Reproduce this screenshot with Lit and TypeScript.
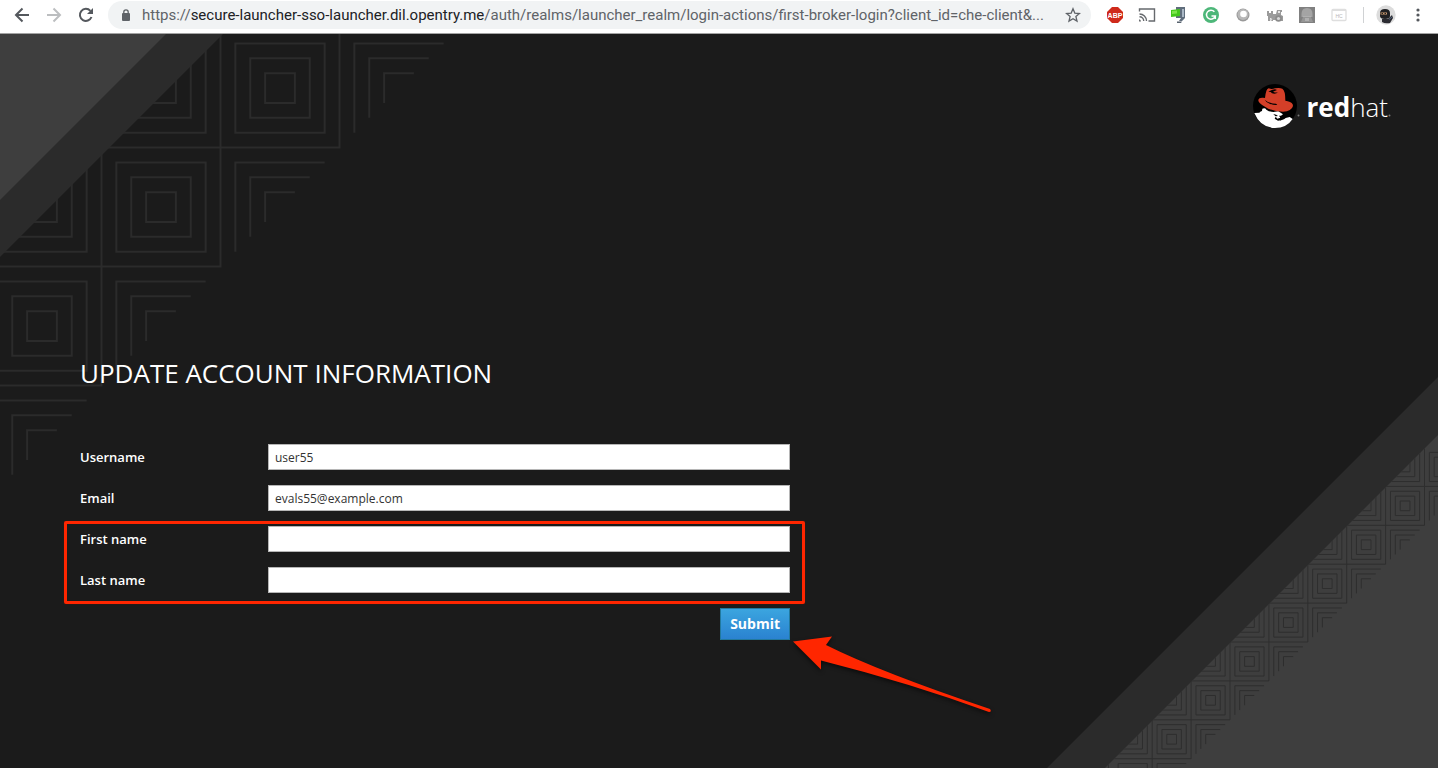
import { LitElement, html, svg, css } from "lit";
import { customElement } from "lit/decorators.js";

/** Path of three nested squares inside a cell whose top left corner is x, y. */
const squares = (x: number, y: number, cell: number): string =>
  [1, 2, 3]
    .map((n) => {
      const d = (cell * n) / 8;
      const s = cell - 2 * d;
      return `M${x + d} ${y + d}h${s}v${s}h${-s}z`;
    })
    .join("");

/** Path of three nested open corners, the upper left halves of the squares. */
const corners = (x: number, y: number, cell: number): string =>
  [1, 2, 3]
    .map((n) => {
      const d = (cell * n) / 8;
      const s = cell - 2 * d;
      return `M${x + d + s} ${y + d}h${-s}v${s}`;
    })
    .join("");

/** Diagonal staircase of cells, running down and to the left from x, y. */
const staircase = (x: number, y: number, cell: number, steps: number): string => {
  let path = "";
  for (let i = 0; i < steps; i++) {
    const cx = x - i * cell;
    const cy = y + i * cell;
    path += squares(cx, cy, cell);
    path += squares(cx - cell, cy, cell);
    path += corners(cx + cell, cy, cell);
    path += `M${cx + cell} ${cy - cell}v${cell * 2}h${-2 * cell}`;
  }
  return path;
};

@customElement("browser-bar")
export class BrowserBar extends LitElement {
  static styles = css`
    :host {
      display: flex;
      align-items: center;
      box-sizing: border-box;
      height: 34px;
      padding: 0 4px 3px 6px;
      background: #fff;
      border-bottom: 1px solid #a3a3a3;
      font-family: Roboto, "Liberation Sans", sans-serif;
    }
    button {
      display: flex;
      align-items: center;
      justify-content: center;
      flex: none;
      width: 32px;
      height: 28px;
      padding: 0;
      border: 0;
      background: none;
    }
    svg {
      display: block;
      flex: none;
    }
    .address {
      display: flex;
      align-items: center;
      flex: 1;
      min-width: 0;
      height: 28px;
      margin: 0 8px 0 6px;
      padding: 0 2px 0 10px;
      border-radius: 14px;
      background: #f1f3f4;
      font-size: 15px;
      color: #5f6368;
    }
    .url {
      flex: 1;
      min-width: 0;
      margin-left: 8px;
      overflow: hidden;
      white-space: nowrap;
    }
    .host {
      color: #202124;
    }
    .divider {
      flex: none;
      width: 1px;
      height: 16px;
      margin: 0 6px 0 8px;
      background: #d0d2d4;
    }
    .abp {
      font: bold 7px "Liberation Sans", sans-serif;
    }
    .tiny {
      font: 5px "Liberation Sans", sans-serif;
    }
  `;

  render() {
    return html`
      <button aria-label="Back">
        <svg width="16" height="16" fill="none" stroke="#54585d" stroke-width="2">
          <path d="M15 8H2.500M8.500 1.500 2 8l6.500 6.500" />
        </svg>
      </button>
      <button aria-label="Forward">
        <svg width="16" height="16" fill="none" stroke="#bcbec0" stroke-width="2">
          <path d="M1 8h12.500M7.500 1.500 14 8l-6.500 6.500" />
        </svg>
      </button>
      <button aria-label="Reload">
        <svg width="16" height="16" fill="none" stroke="#54585d" stroke-width="2">
          <path d="M13.500 10A6 6 0 1 1 12.400 3.900" />
          <path d="M15 1v6H9z" fill="#54585d" stroke="none" />
        </svg>
      </button>
      <div class="address">
        <svg width="16" height="16">
          <rect x="4" y="6" width="8" height="8" rx="1" fill="#5f6368" />
          <path d="M5.800 6.500V5a2.200 2.200 0 0 1 4.400 0v1.500" fill="none" stroke="#5f6368" stroke-width="1.300" />
        </svg>
        <span class="url"
          >https://<span class="host">secure-launcher-sso-launcher.dil.opentry.me</span
          >/auth/realms/launcher_realm/login-actions/first-broker-login?client_id=che-client&amp;...</span
        >
        <button aria-label="Bookmark this page">
          <svg width="16" height="16" fill="none" stroke="#5f6368" stroke-width="1.300">
            <path d="m8 1.800 1.800 4.300 4.600.4-3.500 3 1.100 4.600L8 11.700l-4 2.400 1.100-4.600-3.500-3 4.600-.4z" />
          </svg>
        </button>
      </div>
      <button aria-label="Adblock Plus">
        <svg width="18" height="18">
          <path d="M6 1h6l5 5v6l-5 5H6l-5-5V6z" fill="#cf2a1b" />
          <text class="abp" x="9" y="11.500" text-anchor="middle" fill="#fff">ABP</text>
        </svg>
      </button>
      <button aria-label="Cast">
        <svg width="18" height="16" fill="none" stroke="#66696d" stroke-width="1.400">
          <path d="M1.500 4.500V2h15v12h-6M1.500 7a7 7 0 0 1 7 7M1.500 9.800a4.200 4.200 0 0 1 4.200 4.200" />
          <path d="M1 12.300A2.200 2.200 0 0 1 3 14.500H1z" fill="#66696d" stroke="none" />
        </svg>
      </button>
      <button aria-label="Capture">
        <svg width="18" height="18">
          <path d="M6 1h9v11l-3 3H9l2-3H6z" fill="#5f6d7c" />
          <path d="M12 3h2v8h-2z" fill="#a9b7c5" />
          <path d="M7 15.500h5l-1 1.500H7z" fill="#59636f" />
          <path d="m1 4 9-1v7l-9 1z" fill="#45c81c" />
          <path d="m2 5 5-.5v3L2 8z" fill="#7ee64c" />
        </svg>
      </button>
      <button aria-label="Grammarly">
        <svg width="18" height="18" fill="none">
          <circle cx="9" cy="9" r="8" fill="#4db779" />
          <path d="M12.400 5.700A4.500 4.500 0 1 0 13.300 10H9.500m3.800 0v3" stroke="#fff" stroke-width="1.500" />
        </svg>
      </button>
      <button aria-label="Recorder">
        <svg width="16" height="16">
          <circle cx="8" cy="8" r="6.500" fill="#999" />
          <circle cx="8" cy="7.400" r="5.500" fill="#b8b8b8" />
          <circle cx="8.500" cy="7" r="3.300" fill="#fff" />
        </svg>
      </button>
      <button aria-label="Tractor">
        <svg width="18" height="18">
          <path d="M1 5h2v2h2V5h2v3h3l1-4h5v2h-1v3l2 1v5h-4l-1-1H7v1H5v-3H4v3H2v-5H1z" fill="#9b9b9b" />
          <path d="M12 5h2v2h-2z" fill="#e4e4e4" />
          <circle cx="12.500" cy="12.500" r="3.300" fill="#8b8b8b" />
          <circle cx="12.500" cy="12.500" r="1.600" fill="#d6d6d6" />
          <circle cx="5" cy="13.500" r="1.200" fill="#d6d6d6" />
        </svg>
      </button>
      <button aria-label="Helper">
        <svg width="16" height="17">
          <path d="M0 0h16v16H0z" fill="#808080" />
          <path d="M2.500 10V7q0-6 5.500-6t5.500 6v3z" fill="#a4a4a4" />
          <path d="M4 10h8l2 5H2z" fill="#969696" />
          <path d="M4 9h8v1H4zM6 11h4v3H6z" fill="#b0b0b0" />
        </svg>
      </button>
      <button aria-label="Window tool">
        <svg width="16" height="14">
          <rect x="1" y="1.500" width="14" height="11" rx="1" fill="#fff" stroke="#dedede" stroke-width="1.300" />
          <path d="M1 1h14v2H1z" fill="#dedede" />
          <text class="tiny" x="8" y="9.500" text-anchor="middle" fill="#b8b8b8">HC</text>
        </svg>
      </button>
      <span class="divider"></span>
      <button aria-label="Profile">
        <svg width="20" height="20">
          <circle cx="10" cy="10" r="9.700" fill="#dcdcdc" />
          <path d="M4 8q0-4 5-4t5 4v3q0 3-5 3t-5-3z" fill="#202023" />
          <path d="M4.500 7.500h6.500v2H4.500z" fill="#cc9a70" />
          <path d="M5.500 8h1.500v1H5.500zm3 0H10v1H8.500z" fill="#222" />
          <path d="M6 14h6l4-4 1 3-3 5q-5 1-8-1z" fill="#2b2b31" />
          <path d="M13 14.500 16 12" stroke="#51627c" />
        </svg>
      </button>
      <button aria-label="Menu">
        <svg width="16" height="16" fill="#54585d">
          <circle cx="8" cy="3" r="1.600" />
          <circle cx="8" cy="8" r="1.600" />
          <circle cx="8" cy="13" r="1.600" />
        </svg>
      </button>
    `;
  }
}

@customElement("brand-logo")
export class BrandLogo extends LitElement {
  static styles = css`
    :host {
      display: flex;
      align-items: center;
      color: #fff;
      font: 300 26px/42px "Open Sans", sans-serif;
    }
    svg {
      display: block;
    }
    .name {
      display: flex;
      padding: 2px 0 0 7px;
    }
    .strong {
      font-weight: 700;
    }
  `;

  private mark() {
    return html`
      <svg width="3" height="22" aria-hidden="true">
        <circle cx="1.500" cy="20.500" r="1" fill="#777" />
      </svg>
    `;
  }

  render() {
    return html`
      <svg width="44" height="44" viewBox="0 0 132 132" role="img" aria-label="Hat logo">
        <circle cx="66" cy="66" r="66" fill="#000" />
        <path
          fill="#fff"
          d="M4 87 19 86Q23 82 27 81L28 74Q36 70 40 77Q48 83 61 84L76 82L90 91L84 95L78 95L82 101L73 104L68 98L65 104L75 110Q92 109 98 102L110 99L119 105Q101 132 66 132Q22 131 4 87Z"
        />
        <path fill="#000" d="M61 91q8-1 14 5l-7 1zM81 101l6-5 3 4-7 11z" />
        <path
          fill="#d43f28"
          d="M36 42Q39 14 47 13Q57 17 66 13Q79 10 88 14Q97 19 97 50L104 52Q120 55 120 66Q116 82 90 83Q56 82 36 68Q15 57 16 48Q18 40 30 41Z"
        />
        <path fill="#000" d="M35 47Q46 58 69 59L73 63Q62 64 50 59Q39 55 35 47ZM46 23q10-6 20-7l6 2-12 5q8 4 16 2-8 6-19 3l-4-4z" />
      </svg>
      ${this.mark()}
      <span class="name"><span class="strong">red</span>hat</span>
      ${this.mark()}
    `;
  }
}

@customElement("app-root")
export class AppRoot extends LitElement {
  static styles = css`
    :host {
      display: flex;
      flex-direction: column;
      min-height: 100vh;
      background: #1b1b1b;
      color: #fff;
      font-family: "Open Sans", sans-serif;
    }
    .page {
      position: relative;
      flex: 1;
      overflow: hidden;
    }
    .art {
      position: absolute;
      display: block;
    }
    .art-start {
      top: 0;
      left: 0;
    }
    .art-end {
      right: 0;
      bottom: 0;
    }
    .content {
      position: relative;
    }
    header {
      display: flex;
      justify-content: flex-end;
      padding: 50px 47px 0 80px;
    }
    main {
      max-width: 710px;
      padding: 226px 80px 40px;
    }
    h1 {
      margin: 0 0 52px;
      font-size: 26px;
      line-height: 38px;
      font-weight: 400;
      text-transform: uppercase;
    }
    form,
    .group {
      display: flex;
      flex-direction: column;
      gap: 15px;
    }
    .group {
      position: relative;
    }
    .group::after {
      content: "";
      position: absolute;
      inset: -5px -15px -11px -16px;
      border: 3px solid #ff2600;
      border-radius: 2px;
      box-shadow: 0 0 1px #7a1500;
      pointer-events: none;
    }
    .row {
      display: grid;
      grid-template-columns: 188px 1fr;
      align-items: center;
    }
    label {
      font-size: 13px;
      line-height: 26px;
      font-weight: 600;
    }
    input {
      box-sizing: border-box;
      width: 100%;
      height: 26px;
      margin: 0;
      padding: 2px 6px;
      border: 1px solid #b6b6b6;
      border-radius: 0;
      background: #fff;
      color: #333;
      font: 12px/20px "Open Sans", sans-serif;
    }
    .actions {
      position: relative;
      display: flex;
      justify-content: flex-end;
    }
    .submit {
      box-sizing: border-box;
      height: 32px;
      padding: 0 9px;
      border: 1px solid #21799f;
      border-radius: 0;
      background: linear-gradient(#3ba5df, #2a82d0);
      color: #fff;
      font: 700 14px/28px "Open Sans", sans-serif;
    }
    .arrow {
      position: absolute;
      top: 24px;
      left: 100%;
      overflow: visible;
      filter: drop-shadow(0 2px 2px rgba(0, 0, 0, 0.6));
    }
  `;

  private field(id: string, label: string, value = "", type = "text") {
    return html`
      <div class="row">
        <label for=${id}>${label}</label>
        <input id=${id} name=${id} type=${type} .value=${value} />
      </div>
    `;
  }

  private startArt() {
    return svg`
      <path d=${staircase(220.5, -5.5, 119, 4)} fill="none" stroke="#2b2b2b" stroke-width="2" />
      <path d="M0 0H223L0 223z" fill="#2b2b2b" />
      <path d="M0 0H166L0 166z" fill="#3e3e3e" />
    `;
  }

  private endArt() {
    return svg`
      <path d="M391 0V391H0z" fill="#2b2b2b" />
      <path d="M391 58V391H58z" fill="#3e3e3e" />
      <g clip-path="url(#corner)">
        <path d=${staircase(377.5, 70.5, 38.9, 9)} fill="none" stroke="#2e2e2e" stroke-width="1" />
      </g>
      <clipPath id="corner"><path d="M391 58V391H58z" /></clipPath>
    `;
  }

  render() {
    return html`
      <browser-bar></browser-bar>
      <div class="page">
        <svg class="art art-start" width="450" height="450" aria-hidden="true">${this.startArt()}</svg>
        <svg class="art art-end" width="391" height="391" aria-hidden="true">${this.endArt()}</svg>
        <div class="content">
          <header><brand-logo></brand-logo></header>
          <main>
            <h1>Update Account Information</h1>
            <form @submit=${(e: Event) => e.preventDefault()}>
              ${this.field("username", "Username", "user55")}
              ${this.field("email", "Email", "evals55@example.com", "email")}
              <div class="group">
                ${this.field("firstName", "First name")} ${this.field("lastName", "Last name")}
              </div>
              <div class="actions">
                <button class="submit" type="submit">Submit</button>
                <svg class="arrow" width="204" height="80" aria-hidden="true">
                  <path
                    d="M3 9.500 42 4.500 36 13Q90 40 200 77Q202 80 199 80Q120 51 31 28.500V37.500Z"
                    fill="#ff2600"
                  />
                </svg>
              </div>
            </form>
          </main>
        </div>
      </div>
    `;
  }
}
